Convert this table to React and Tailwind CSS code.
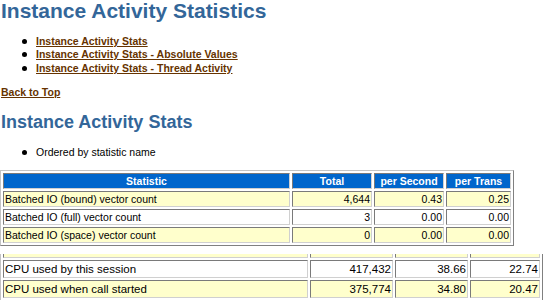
import React from 'react';

const links = [
  'Instance Activity Stats',
  'Instance Activity Stats - Absolute Values',
  'Instance Activity Stats - Thread Activity',
];

const statRows = [
  { name: 'Batched IO (bound) vector count', total: '4,644', sec: '0.43', trans: '0.25' },
  { name: 'Batched IO (full) vector count', total: '3', sec: '0.00', trans: '0.00' },
  { name: 'Batched IO (space) vector count', total: '0', sec: '0.00', trans: '0.00' },
];

// second snapshot of the same report, cropped at the top
const cpuRows = [
  { name: '', total: '', sec: '', trans: '' },
  { name: 'CPU used by this session', total: '417,432', sec: '38.66', trans: '22.74' },
  { name: 'CPU used when call started', total: '375,774', sec: '34.80', trans: '20.47' },
];

const outerBorder =
  'border border-t-[#c4c4c4] border-l-[#c4c4c4] border-r-[#808080] border-b-[#808080]';
const cellBorder =
  'border border-t-[#7a7a7a] border-l-[#7a7a7a] border-r-[#d0d0d0] border-b-[#d0d0d0]';

const Bullet = () => (
  <span className="ml-[22px] mr-[9px] h-[5px] w-[5px] shrink-0 rounded-full bg-black" />
);

const StatGrid = ({ rows, cols, rowH, text, header, width, shift = '' }) => (
  <div className={`grid ${cols} ${rowH} ${width} gap-[2px] p-[2px] ${outerBorder} ${shift}`}>
    {header &&
      ['Statistic', 'Total', 'per Second', 'per Trans'].map((h) => (
        <div
          key={h}
          className={`${cellBorder} bg-[#0066cc] text-center font-bold text-white ${text}`}
        >
          {h}
        </div>
      ))}
    {rows.map((r, i) => {
      const bg = i % 2 === 0 ? 'bg-[#ffffcc]' : 'bg-white';
      return (
        <React.Fragment key={i}>
          <div className={`${cellBorder} ${bg} ${text} px-[1px] whitespace-nowrap text-black`}>
            {r.name}
          </div>
          <div className={`${cellBorder} ${bg} ${text} px-[1px] text-right text-black`}>{r.total}</div>
          <div className={`${cellBorder} ${bg} ${text} px-[1px] text-right text-black`}>{r.sec}</div>
          <div className={`${cellBorder} ${bg} ${text} px-[1px] text-right text-black`}>{r.trans}</div>
        </React.Fragment>
      );
    })}
  </div>
);

export default function App() {
  return (
    <div className="h-[300px] w-[550px] overflow-hidden bg-white font-['Liberation_Sans',Arial,Helvetica,sans-serif]">
      <h1 className="pl-[1px] text-[21px] font-bold leading-[21px] text-[#336699]">
        Instance Activity Statistics
      </h1>

      <ul className="mt-[14px]">
        {links.map((l) => (
          <li key={l} className="flex h-[13.3px] items-center text-[10.5px] leading-[13.3px]">
            <Bullet />
            <a href="#" className="font-bold text-[#663300] underline decoration-[#663300]">
              {l}
            </a>
          </li>
        ))}
      </ul>

      <div className="mt-[11px] text-[10.5px] leading-[13.3px]">
        <a href="#" className="pl-[1px] font-bold text-[#663300] underline">
          Back to Top
        </a>
      </div>

      <h2 className="mt-[14px] pl-[1px] text-[18px] font-bold leading-[18px] text-[#336699]">
        Instance Activity Stats
      </h2>

      <ul className="mt-[15px]">
        <li className="flex h-[13.3px] items-center text-[10.5px] leading-[13.3px] text-black">
          <Bullet />
          Ordered by statistic name
        </li>
      </ul>

      <div className="mt-[10.7px]">
        <StatGrid
          rows={statRows}
          cols="grid-cols-[287px_80px_70px_65px]"
          rowH="auto-rows-[16px]"
          text="text-[10.5px] leading-[14px]"
          width="w-[514px]"
          header
        />
      </div>

      <div className="mt-[8px] h-[46px] overflow-hidden">
        <StatGrid
          rows={cpuRows}
          cols="grid-cols-[305px_83px_73px_70px]"
          rowH="auto-rows-[18px]"
          text="text-[11.5px] leading-[16px]"
          width="w-[543px]"
          shift="-mt-[17px]"
        />
      </div>
    </div>
  );
}
